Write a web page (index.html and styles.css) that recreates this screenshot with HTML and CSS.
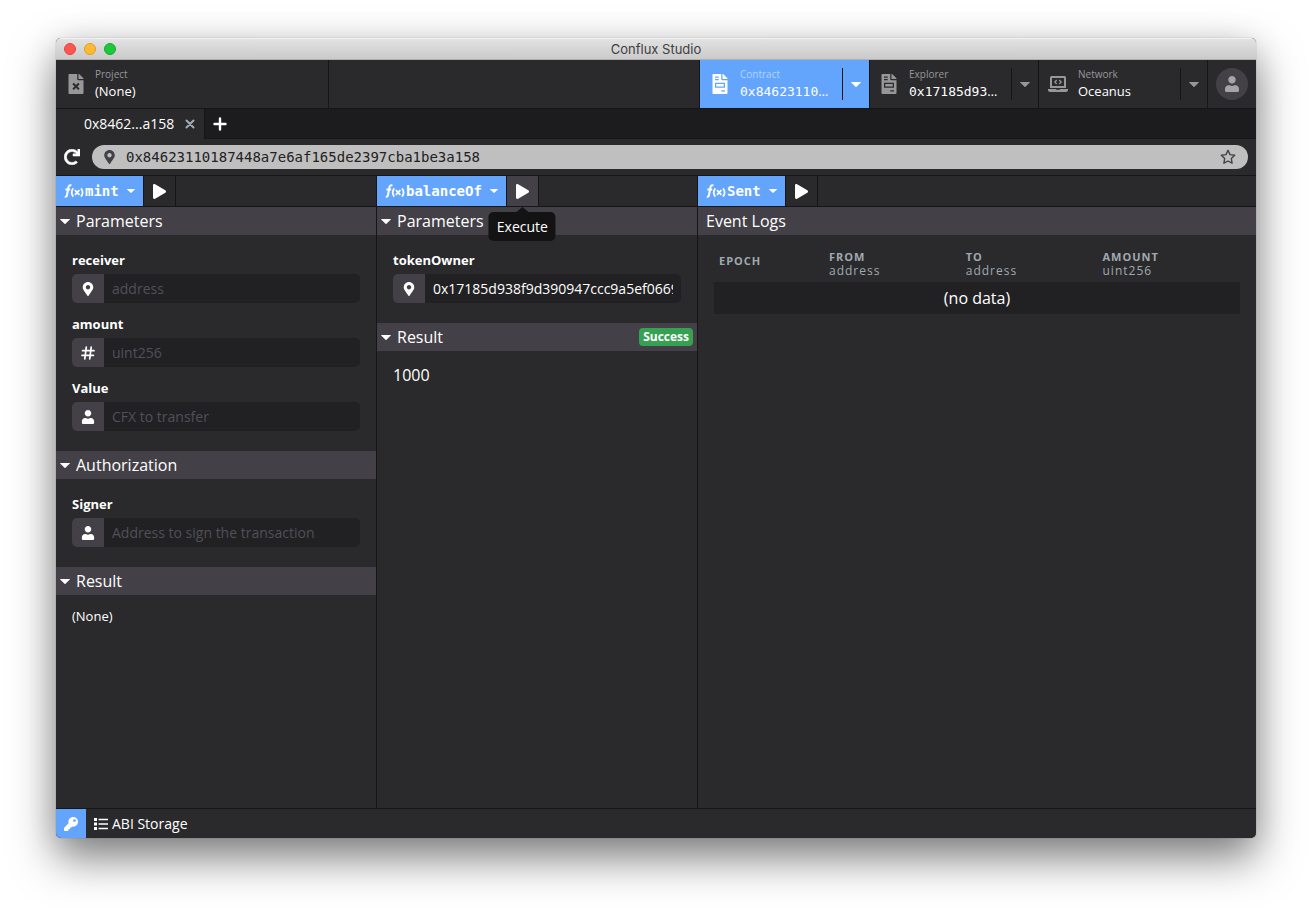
FILE: index.html
```html
<!DOCTYPE html>
<html lang="en">
<head>
<meta charset="utf-8">
<title>Conflux Studio</title>
<link rel="stylesheet" href="styles.css">
</head>
<body>
<svg class="sprite" aria-hidden="true">
  <symbol id="pin" viewBox="0 0 384 512"><path d="M172.268 501.67C26.97 291.031 0 269.413 0 192 0 85.961 85.961 0 192 0s192 85.961 192 192c0 77.413-26.97 99.031-172.268 309.67-9.535 13.774-29.93 13.773-39.464 0zM192 272c44.183 0 80-35.817 80-80s-35.817-80-80-80-80 35.817-80 80 35.817 80 80 80z"/></symbol>
  <symbol id="user" viewBox="0 0 448 512"><path d="M224 240c66 0 120-54 120-120S290 0 224 0 104 54 104 120s54 120 120 120zM330 294h-30c-22 14-46 22-76 22s-54-8-76-22h-30C52 294 0 346 0 412v52c0 26.500 21.500 48 48 48h352c26.500 0 48-21.500 48-48v-52c0-66-52-118-118-118z"/></symbol>
  <symbol id="hash" viewBox="0 0 14 14"><path d="M5.3 1.2 3.8 12.8M10.2 1.2 8.7 12.8M1.6 4.7H13M1 9.3h11.400" fill="none" stroke="currentColor" stroke-width="1.700" stroke-linecap="round"/></symbol>
  <symbol id="play" viewBox="0 0 448 512"><path d="M424.4 214.7L72.4 6.6C43.8-10.3 0 6.1 0 47.9V464c0 37.5 40.7 60.1 72.4 41.3l352-208c31.4-18.5 31.5-64.1 0-82.6z"/></symbol>
  <symbol id="caret" viewBox="0 0 10 5"><path d="M.4 0h9.200q.5.200.2.600L5.500 4.800q-.5.400-1 0L.2.600Q-.1.200.4 0z"/></symbol>
  <symbol id="invoice" viewBox="0 0 384 512"><path fill-rule="evenodd" d="M224 136V0H24C10.700 0 0 10.700 0 24v464c0 13.300 10.700 24 24 24h336c13.300 0 24-10.700 24-24V160H248c-13.200 0-24-10.800-24-24zM64 64h96v32H64zm0 64h96v32H64zm256 320h-96v-32h96zM64 224h256v128H64zm32 32v64h192v-64zM377 105 279 7c-4.500-4.500-10.600-7-17-7h-6v128h128v-6.100c0-6.300-2.500-12.400-7-16.900z"/></symbol>
  <symbol id="filex" viewBox="0 0 384 512"><path fill-rule="evenodd" d="M224 136V0H24C10.700 0 0 10.700 0 24v464c0 13.300 10.700 24 24 24h336c13.300 0 24-10.700 24-24V160H248c-13.200 0-24-10.800-24-24zM100 262l36-36 56 56 56-56 36 36-56 56 56 56-36 36-56-56-56 56-36-36 56-56zM377 105 279 7c-4.500-4.500-10.600-7-17-7h-6v128h128v-6.100c0-6.300-2.500-12.400-7-16.900z"/></symbol>
  <symbol id="laptop" viewBox="0 0 20 16"><path fill-rule="evenodd" d="M3.500 0h13A1.500 1.500 0 0 1 18 1.500V12H2V1.500A1.500 1.500 0 0 1 3.500 0zM4 2v8h12V2zM0 13h7.800q.2.800 1 .8h2.400q.8 0 1-.8H20v1a2 2 0 0 1-2 2H2a2 2 0 0 1-2-2z"/><path d="M8.700 4 6.900 6l1.800 2M11.300 4l1.800 2-1.800 2" fill="none" stroke="currentColor" stroke-width="1.300"/></symbol>
  <symbol id="fx" viewBox="0 0 20 16"><path d="M7.400 2.500C5.600 1.800 4.700 2.600 4.400 4.300L3 12c-.2 1.500-1 2-2.200 1.700M1.400 6.400h4.800" fill="none" stroke="currentColor" stroke-width="2"/><path d="M9.300 5.400c-1.900 2.400-1.900 5.800 0 8.200M17 5.400c1.900 2.400 1.900 5.800 0 8.200M10.900 7.200l4.500 4.600M15.400 7.200l-4.500 4.600" fill="none" stroke="currentColor" stroke-width="1.700"/></symbol>
</svg>
<main class="window">
  <div class="titlebar">
    <div class="lights"><i class="light red"></i><i class="light amber"></i><i class="light green"></i></div>
    <span>Conflux Studio</span>
  </div>

  <header class="header">
    <button class="project"><svg class="nav-icon"><use href="#filex"/></svg><span class="nav-text"><small>Project</small><span>(None)</span></span></button>
    <div class="nav-space"></div>
    <div class="nav active">
      <button class="nav-main"><svg class="nav-icon"><use href="#invoice"/></svg><span class="nav-text"><small>Contract</small><code>0x84623110<span class="dots">…</span></code></span></button>
      <button class="nav-caret" aria-label="Contracts"><svg class="caret"><use href="#caret"/></svg></button>
    </div>
    <div class="nav">
      <button class="nav-main"><svg class="nav-icon"><use href="#invoice"/></svg><span class="nav-text"><small>Explorer</small><code>0x17185d93<span class="dots">…</span></code></span></button>
      <button class="nav-caret" aria-label="Addresses"><svg class="caret"><use href="#caret"/></svg></button>
    </div>
    <div class="nav">
      <button class="nav-main wide-icon"><svg class="nav-icon"><use href="#laptop"/></svg><span class="nav-text"><small>Network</small><span>Oceanus</span></span></button>
      <button class="nav-caret" aria-label="Networks"><svg class="caret"><use href="#caret"/></svg></button>
    </div>
    <button class="account" aria-label="Account"><span class="avatar"><svg><use href="#user"/></svg></span></button>
  </header>

  <div class="tabs">
    <div class="tab"><span>0x8462...a158</span><button class="tab-close" aria-label="Close tab"><svg viewBox="0 0 10 10"><path d="M1.500 1.500l7 7M8.500 1.500l-7 7"/></svg></button></div>
    <div class="tab-rest"><button class="tab-add" aria-label="New tab"><svg viewBox="0 0 14 14"><path d="M7 1.500v11M1.500 7h11"/></svg></button></div>
  </div>

  <div class="address-row">
    <button class="reload" aria-label="Reload"><svg viewBox="0 0 512 512"><path d="M500.330 0h-47.410a12 12 0 0 0-12 12.570l4 82.760A247.420 247.420 0 0 0 256 8C119.340 8 7.900 119.530 8 256.190 8.100 393.070 119.100 504 256 504a247.100 247.100 0 0 0 166.180-63.910 12 12 0 0 0 .48-17.430l-34-34a12 12 0 0 0-16.380-.55A176 176 0 1 1 402.100 157.800l-101.530-4.870a12 12 0 0 0-12.570 12v47.410a12 12 0 0 0 12 12h200.330a12 12 0 0 0 12-12V12a12 12 0 0 0-12-12z"/></svg></button>
    <div class="address">
      <svg class="address-pin"><use href="#pin"/></svg>
      <input aria-label="Contract address" value="0x84623110187448a7e6af165de2397cba1be3a158">
      <button class="star" aria-label="Star"><svg viewBox="0 0 16 16"><path d="M8 1.300l2 4.300 4.700.6-3.400 3.300.8 4.700L8 12l-4.100 2.200.8-4.700L1.300 6.200 6 5.600z"/></svg></button>
    </div>
  </div>

  <div class="panels">
    <section class="panel">
      <div class="toolbar">
        <button class="method"><svg class="fx"><use href="#fx"/></svg><b>mint</b><svg class="method-caret"><use href="#caret"/></svg></button>
        <button class="run" aria-label="Execute mint"><svg><use href="#play"/></svg></button>
      </div>
      <h2 class="bar"><svg class="caret"><use href="#caret"/></svg>Parameters</h2>
      <form class="fields">
        <div class="field"><label for="receiver">receiver</label><div class="group"><span class="addon"><svg><use href="#pin"/></svg></span><input id="receiver" placeholder="address"></div></div>
        <div class="field"><label for="amount">amount</label><div class="group"><span class="addon"><svg><use href="#hash"/></svg></span><input id="amount" placeholder="uint256"></div></div>
        <div class="field"><label for="value">Value</label><div class="group"><span class="addon"><svg><use href="#user"/></svg></span><input id="value" placeholder="CFX to transfer"></div></div>
      </form>
      <h2 class="bar"><svg class="caret"><use href="#caret"/></svg>Authorization</h2>
      <form class="fields">
        <div class="field"><label for="signer">Signer</label><div class="group"><span class="addon"><svg><use href="#user"/></svg></span><input id="signer" placeholder="Address to sign the transaction"></div></div>
      </form>
      <h2 class="bar"><svg class="caret"><use href="#caret"/></svg>Result</h2>
      <p class="result small">(None)</p>
    </section>

    <section class="panel">
      <div class="toolbar">
        <button class="method"><svg class="fx"><use href="#fx"/></svg><b>balanceOf</b><svg class="method-caret"><use href="#caret"/></svg></button>
        <div class="run-wrap">
          <button class="run hover" aria-label="Execute balanceOf" aria-describedby="tip"><svg><use href="#play"/></svg></button>
          <div class="tooltip" id="tip" role="tooltip">Execute</div>
        </div>
      </div>
      <h2 class="bar"><svg class="caret"><use href="#caret"/></svg>Parameters</h2>
      <form class="fields">
        <div class="field"><label for="owner">tokenOwner</label><div class="group"><span class="addon"><svg><use href="#pin"/></svg></span><input id="owner" value="0x17185d938f9d390947ccc9a5ef0669"></div></div>
      </form>
      <h2 class="bar"><svg class="caret"><use href="#caret"/></svg>Result<span class="badge">Success</span></h2>
      <p class="result">1000</p>
    </section>

    <section class="panel">
      <div class="toolbar">
        <button class="method"><svg class="fx"><use href="#fx"/></svg><b>Sent</b><svg class="method-caret"><use href="#caret"/></svg></button>
        <button class="run" aria-label="Query Sent"><svg><use href="#play"/></svg></button>
      </div>
      <h2 class="bar plain">Event Logs</h2>
      <div class="table-wrap">
        <table>
          <thead><tr><th class="epoch">epoch</th><th class="arg">from<span>address</span></th><th class="arg">to<span>address</span></th><th>amount<span>uint256</span></th></tr></thead>
          <tbody><tr><td colspan="4">(no data)</td></tr></tbody>
        </table>
      </div>
    </section>
  </div>

  <footer class="footer">
    <button class="keys" aria-label="Key manager"><svg viewBox="0 0 512 512"><path d="M512 176.001C512 273.203 433.202 352 336 352c-11.220 0-22.190-1.062-32.827-3.069l-24.012 27.014A23.999 23.999 0 0 1 261.223 384H224v40c0 13.255-10.745 24-24 24h-40v40c0 13.255-10.745 24-24 24H24c-13.255 0-24-10.745-24-24v-78.059c0-6.365 2.529-12.470 7.029-16.971l161.802-161.802C163.108 213.814 160 195.271 160 176 160 78.798 238.797.001 335.999 0 433.488-.001 512 78.511 512 176.001zM336 128c0 26.510 21.490 48 48 48s48-21.490 48-48-21.490-48-48-48-48 21.490-48 48z"/></svg></button>
    <button class="abi"><svg viewBox="0 0 14 12"><path d="M0 0h3v3H0zM0 4.500h3v3H0zM0 9h3v3H0zM4.500.7H14v1.600H4.500zM4.500 5.200H14v1.600H4.500zM4.500 9.700H14v1.600H4.500z"/></svg>ABI Storage</button>
  </footer>
</main>
</body>
</html>
```
FILE: styles.css
```css
* { box-sizing: border-box; }

body {
  margin: 0;
  min-height: 100vh;
  padding: 38px 56px 74px;
  display: flex;
  background: #fff;
  color: #fff;
  font: 14px/20px "Open Sans", "Noto Sans", sans-serif;
}

svg { display: block; flex: none; fill: currentColor; }
.sprite { position: absolute; width: 0; height: 0; }
button, input { font: inherit; color: inherit; border: 0; margin: 0; padding: 0; background: none; outline: 0; }
button { display: flex; align-items: center; }
code, .address input, .method { font-family: "DejaVu Sans Mono", monospace; }

.window {
  flex: 1;
  min-width: 0;
  display: flex;
  flex-direction: column;
  background: #2a2a2c;
  border-radius: 5px;
  box-shadow: 0 0 1px rgba(0, 0, 0, .5), 0 20px 44px rgba(0, 0, 0, .5), 0 0 32px rgba(0, 0, 0, .08);
}

/* Title bar */
.titlebar {
  height: 22px;
  display: grid;
  grid-template-columns: 1fr auto 1fr;
  align-items: center;
  padding-left: 8px;
  border-radius: 5px 5px 0 0;
  border-top: 1px solid #f2f2f2;
  border-bottom: 1px solid #b0b0b0;
  background: linear-gradient(#e2e2e2, #cacaca);
  color: #404040;
  font-family: Inter, sans-serif;
  font-size: 13px;
}
.titlebar > span { padding-right: 8px; }
.lights { display: flex; gap: 8px; }
.light { width: 12px; height: 12px; border-radius: 50%; border: 1px solid; }
.red { background: #ff5650; border-color: #e2443e; }
.amber { background: #ffb932; border-color: #dfa023; }
.green { background: #1ec73c; border-color: #12ac28; }

/* Header */
.header { display: flex; height: 49px; border-bottom: 1px solid #161617; }
.project { width: 273px; padding-left: 12px; gap: 11px; border-right: 1px solid #161617; }
.nav-space { flex: 1; border-right: 1px solid #161617; }
.nav { display: flex; align-items: center; width: 169px; border-left: 1px solid #161617; color: #979799; }
.nav.active { background: #63a5fd; border-left: 0; color: #fff; }
.nav-main { flex: 1; height: 48px; gap: 12px; padding-left: 11px; min-width: 0; }
.active .nav-main { padding-left: 12px; }
.nav-icon { width: 16px; height: 20px; }
.project .nav-icon { color: #979799; }
.wide-icon { padding-left: 9px; gap: 10px; }
.wide-icon .nav-icon { width: 20px; height: 16px; }
.nav-text { display: flex; flex-direction: column; padding-bottom: 2px; text-align: left; font-size: 13px; line-height: 18px; color: #fff; }
.nav-text small { font-size: 10px; line-height: 16px; color: #97979a; }
.nav.active small { color: #b2d3ff; }
.dots { font-family: "Open Sans", sans-serif; }
.nav-caret { width: 27px; height: 32px; justify-content: center; border-left: 1px solid #161617; }
.caret { width: 10px; height: 5px; }
.account { width: 49px; justify-content: center; border-left: 1px solid #161617; }
.avatar { display: grid; place-items: center; width: 32px; height: 32px; border-radius: 50%; background: #434147; color: #a5a5a7; }
.avatar svg { width: 16px; height: 16px; }

/* Tabs */
.tabs { display: flex; height: 30px; }
.tab { display: flex; align-items: center; gap: 11px; padding: 0 9px 0 28px; }
.tab-close { color: #a3abb2; }
.tab-close svg { width: 10px; height: 10px; }
.tab-close path { stroke: currentColor; stroke-width: 2; stroke-linecap: round; }
.tab-rest { flex: 1; display: flex; padding-left: 8px; background: #1c1c1e; border: solid #161617; border-width: 0 0 1px 1px; }
.tab-add svg { width: 14px; height: 14px; }
.tab-add path { stroke: currentColor; stroke-width: 2.400; stroke-linecap: round; }

/* Address bar */
.address-row { display: flex; align-items: center; gap: 12px; height: 37px; padding: 0 8px; border-bottom: 1px solid #161617; }
.reload svg { width: 16px; height: 16px; stroke: currentColor; stroke-width: 20; }
.address { flex: 1; display: flex; align-items: center; gap: 11px; height: 24px; padding: 0 12px; border-radius: 12px; background: #bfbfbf; color: #434147; }
.address-pin { width: 11px; height: 14px; }
.address input { flex: 1; min-width: 0; color: #222; }
.star svg { width: 16px; height: 16px; }
.star path { fill: none; stroke: currentColor; stroke-width: 1.400; stroke-linejoin: round; }

/* Panels */
.panels { flex: 1; display: grid; grid-template-columns: 321fr 321fr 558fr; }
.panel { min-width: 0; border-right: 1px solid #161617; }
.panel:last-child { border-right: 0; }
.toolbar { display: flex; height: 31px; border-bottom: 1px solid #161617; }
.method { height: 30px; padding: 0 8px; background: #63a5fd; font-size: 14px; }
.fx { width: 20px; height: 16px; margin-right: 1px; }
.method-caret { width: 8px; height: 4px; margin-left: 8px; }
.run { width: 33px; height: 30px; justify-content: center; border: solid #161617; border-width: 0 1px; }
.run svg { width: 13px; height: 15px; }
.run.hover { background: #434147; }
.run-wrap { position: relative; }
.tooltip {
  position: absolute;
  z-index: 1;
  top: 36px;
  left: 50%;
  transform: translateX(-50%);
  padding: 5px 8px 4px;
  border-radius: 5px;
  background: #131314;
}
.tooltip::before { content: ""; position: absolute; top: -5px; left: 50%; margin-left: -6px; border: solid transparent; border-width: 0 6px 5px; border-bottom-color: #131314; }
.bar { display: flex; align-items: center; gap: 6px; height: 28px; margin: 0; padding: 0 4px; background: #434147; font-size: 16px; font-weight: 400; }
.bar.plain { padding-left: 8px; }
.badge { margin-left: auto; padding: 0 4px; border-radius: 4px; background: #36a152; font-size: 12px; line-height: 18px; font-weight: 700; }

.fields { display: grid; gap: 12px; padding: 16px 16px 20px; }
.field { display: grid; gap: 4px; }
.field label { font-size: 13px; line-height: 19px; font-weight: 700; }
.group { display: flex; height: 29px; border-radius: 5px; overflow: hidden; background: #212123; }
.addon { display: grid; place-items: center; width: 32px; background: #434147; }
.addon svg { width: 14px; height: 14px; }
.group input { flex: 1; min-width: 0; margin: 0 8px; font-size: 14px; }
.group input::placeholder { color: #514f58; opacity: 1; }
.result { margin: 0; padding: 14px 16px; font-size: 16px; }
.result.small { padding-top: 11px; font-size: 13px; }

/* Event log table */
.table-wrap { padding: 13px 16px; }
table { width: 100%; table-layout: fixed; border-collapse: collapse; }
th { padding: 2px 5px 4px; vertical-align: top; text-align: left; font-size: 11px; line-height: 14px; font-weight: 700; letter-spacing: 1px; text-transform: uppercase; color: #a0a9b0; }
th.epoch { width: 110px; line-height: 22px; }
th.arg { width: 26%; }
th span { display: block; font-size: 12px; font-weight: 400; text-transform: none; }
td { height: 32px; padding: 0; background: #212123; text-align: center; font-size: 16px; }

/* Footer */
.footer { display: flex; height: 30px; border-top: 1px solid #161617; }
.keys { width: 30px; justify-content: center; background: #63a5fd; border-radius: 0 0 0 5px; }
.keys svg { width: 14px; height: 14px; }
.abi { gap: 4px; padding: 0 8px; }
.abi svg { width: 14px; height: 12px; }
```
